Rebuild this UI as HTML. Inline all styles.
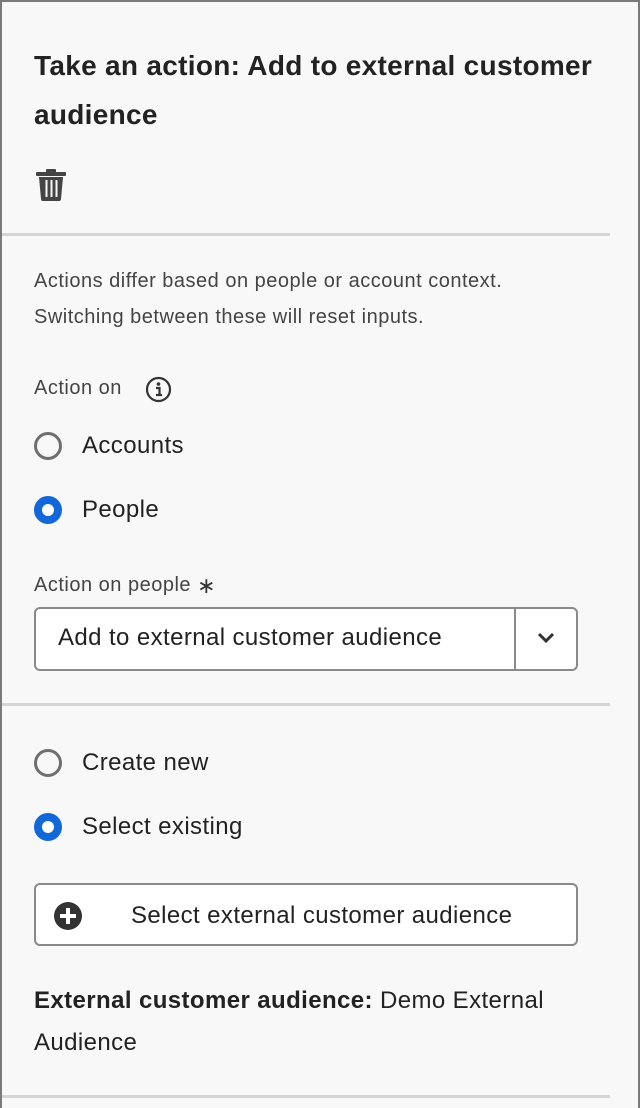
<!DOCTYPE html>
<html><head><style>
*{margin:0;padding:0;box-sizing:border-box}
body{width:640px;height:1108px;background:#f8f8f8;font-family:"Liberation Sans",sans-serif;color:#222;position:relative;overflow:hidden}
.frame{position:absolute;left:0;top:0;width:640px;height:1108px;border:2px solid #7a7a7a;border-bottom:none}
.a{position:absolute;white-space:nowrap}
.hr{position:absolute;left:2px;width:608px;height:3px;background:#d5d5d5}
.radio{position:absolute;left:34px;width:28px;height:28px;border-radius:50%;border:3px solid #6e6e6e;background:#f8f8f8}
.radio.on{border:8px solid #1268d8;background:#fff}
.t{font-size:24px;letter-spacing:0.4px;color:#222}
.s{font-size:20px;letter-spacing:0.5px;color:#444}
</style></head><body>
<div class="frame"></div>
<div class="a" style="left:34px;top:41px;font-size:28px;letter-spacing:0.3px;font-weight:bold;line-height:49px;color:#222">Take an action: Add to external customer<br>audience</div>
<svg class="a" style="left:36px;top:168px" width="31" height="34" viewBox="0 0 31 34"><rect x="0" y="4" width="30" height="4" rx="1" fill="#444"/><rect x="10" y="1" width="10" height="4" rx="1" fill="#444"/><path d="M3 9h24l-2 22a2 2 0 0 1-2 2H7a2 2 0 0 1-2-2z" fill="#444"/><rect x="9.5" y="12" width="2" height="17" fill="#f8f8f8"/><rect x="14.5" y="12" width="2" height="17" fill="#f8f8f8"/><rect x="19.5" y="12" width="2" height="17" fill="#f8f8f8"/></svg>
<div class="hr" style="top:233px"></div>
<div class="a s" style="left:34px;top:263px;line-height:36px">Actions differ based on people or account context.<br>Switching between these will reset inputs.</div>
<div class="a s" style="left:34px;top:377px">Action on</div>
<svg class="a" style="left:145px;top:376px" width="27" height="27" viewBox="0 0 27 27"><circle cx="13.5" cy="13.5" r="11.5" fill="none" stroke="#333" stroke-width="2.2"/><circle cx="13.5" cy="8" r="1.8" fill="#333"/><path d="M11 12h3.5v7M11 19h6" stroke="#333" stroke-width="2.2" fill="none"/></svg>
<div class="radio" style="top:432px"></div><div class="a t" style="left:82px;top:432px">Accounts</div>
<div class="radio on" style="top:496px"></div><div class="a t" style="left:82px;top:496px">People</div>
<div class="a s" style="left:34px;top:571px">Action on people <span style="font-size:22px;color:#333;position:relative;top:2px">&lowast;</span></div>
<div class="a" style="left:34px;top:607px;width:544px;height:64px;border:2px solid #8a8a8a;border-radius:6px;background:#fff"></div>
<div class="a" style="left:514px;top:609px;width:2px;height:60px;background:#8a8a8a"></div>
<div class="a t" style="left:58px;top:624px">Add to external customer audience</div>
<svg class="a" style="left:536px;top:630px" width="20" height="16" viewBox="0 0 20 16"><path d="M3 4l7 7 7-7" fill="none" stroke="#333" stroke-width="3"/></svg>
<div class="hr" style="top:703px"></div>
<div class="radio" style="top:749px"></div><div class="a t" style="left:82px;top:749px">Create new</div>
<div class="radio on" style="top:813px"></div><div class="a t" style="left:82px;top:813px">Select existing</div>
<div class="a" style="left:34px;top:883px;width:544px;height:63px;border:2px solid #8a8a8a;border-radius:6px;background:#fff"></div>
<svg class="a" style="left:52px;top:900px" width="32" height="32" viewBox="0 0 32 32"><circle cx="16" cy="16" r="14" fill="#333"/><path d="M16 8v16M8 16h16" stroke="#fff" stroke-width="4"/></svg>
<div class="a t" style="left:131px;top:902px">Select external customer audience</div>
<div class="a t" style="left:34px;top:980px;line-height:42px;white-space:normal;width:580px"><b>External customer audience:</b> Demo External<br>Audience</div>
<div class="hr" style="top:1095px"></div>
</body></html>
